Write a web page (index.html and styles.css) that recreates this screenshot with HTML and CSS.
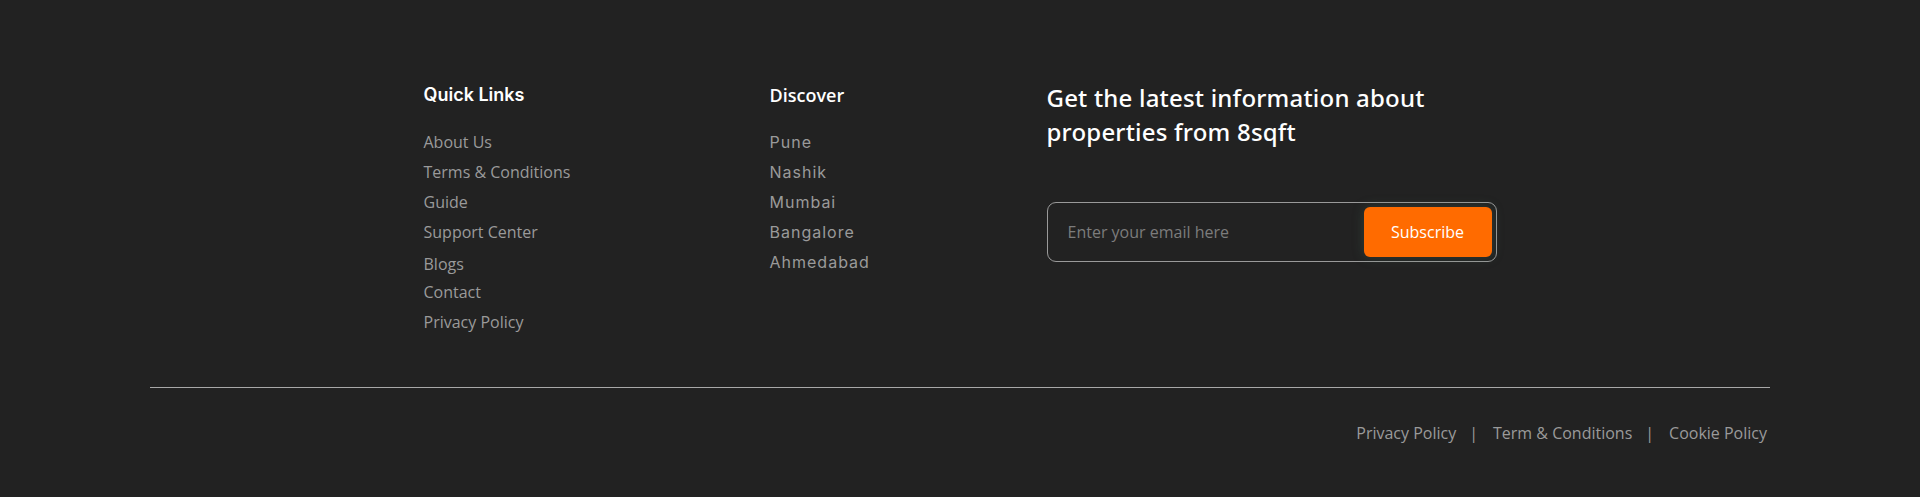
FILE: index.html
```html
<!DOCTYPE html>
<html lang="en">
<head>
<meta charset="utf-8">
<title>Footer</title>
<link rel="stylesheet" href="styles.css">
</head>
<body>
<footer class="footer">
  <div class="footer-top">
    <div class="col col-quick">
      <h3 class="col-title title-inter">Quick Links</h3>
      <ul class="link-list">
        <li><a href="#">About Us</a></li>
        <li><a href="#">Terms &amp; Conditions</a></li>
        <li><a href="#">Guide</a></li>
        <li><a href="#">Support Center</a></li>
        <li class="shift-down"><a href="#">Blogs</a></li>
        <li class="shift-up"><a href="#">Contact</a></li>
        <li><a href="#">Privacy Policy</a></li>
      </ul>
    </div>
    <div class="col col-discover">
      <h3 class="col-title title-open">Discover</h3>
      <ul class="link-list city-list">
        <li><a href="#">Pune</a></li>
        <li><a href="#">Nashik</a></li>
        <li><a href="#">Mumbai</a></li>
        <li><a href="#">Bangalore</a></li>
        <li><a href="#">Ahmedabad</a></li>
      </ul>
    </div>
    <div class="col col-news">
      <h2 class="news-title">Get the latest information about properties from 8sqft</h2>
      <form class="subscribe">
        <input class="subscribe-input" type="email" placeholder="Enter your email here">
        <button class="subscribe-btn" type="button">Subscribe</button>
      </form>
    </div>
  </div>
  <div class="footer-bottom">
    <nav class="legal">
      <a href="#">Privacy Policy</a>
      <span class="sep">|</span>
      <a href="#">Term &amp; Conditions</a>
      <span class="sep">|</span>
      <a href="#">Cookie Policy</a>
    </nav>
  </div>
</footer>
</body>
</html>
```

FILE: styles.css
```css
html, body {
  margin: 0;
  padding: 0;
  background: #222222;
}

body {
  font-family: "Open Sans", "Liberation Sans", sans-serif;
  color: #ffffff;
}

.footer {
  width: 1620px;
  margin: 0 auto;
}

.footer-top {
  width: 1073px;
  margin: 0 auto;
  padding-top: 80px;
  padding-bottom: 50px;
  display: flex;
  align-items: flex-start;
}

.col-quick {
  width: 346px;
  padding-top: 2px;
}

.col-discover {
  width: 277px;
  padding-top: 2px;
}

.col-news {
  width: 450px;
  padding-top: 1px;
}

.col-title {
  margin: 0;
  font-size: 18px;
  line-height: 26px;
  font-weight: 600;
  color: #ffffff;
}

.title-inter {
  font-family: Inter, "Open Sans", sans-serif;
}

.title-open {
  font-family: "Open Sans", "Liberation Sans", sans-serif;
}

.link-list {
  list-style: none;
  margin: 19px 0 0;
  padding: 0;
}

.link-list li {
  font-size: 16px;
  line-height: 30px;
}

.link-list a {
  color: #9a9a9a;
  text-decoration: none;
}

.link-list .shift-down {
  margin-top: 2px;
}

.link-list .shift-up {
  margin-top: -2px;
}

.city-list li {
  font-family: Inter, "Open Sans", sans-serif;
  letter-spacing: 1px;
}

.news-title {
  margin: 0;
  font-family: "Noto Sans", "Open Sans", sans-serif;
  font-size: 24px;
  line-height: 34px;
  font-weight: 500;
  letter-spacing: 0.2px;
  color: #ffffff;
}

.subscribe {
  margin-top: 53px;
  height: 60px;
  box-sizing: border-box;
  border: 1px solid #9a9a9a;
  border-radius: 9px;
  display: flex;
  align-items: center;
  padding: 0 4px 0 20px;
}

.subscribe-input {
  flex: 1;
  min-width: 0;
  background: transparent;
  border: none;
  outline: none;
  padding: 0;
  font-family: "Open Sans", "Liberation Sans", sans-serif;
  font-size: 16px;
  color: #ffffff;
}

.subscribe-input::placeholder {
  color: #7c7c7c;
}

.subscribe-btn {
  width: 128px;
  height: 50px;
  border: none;
  border-radius: 6px;
  background: #ff6b00;
  color: #ffffff;
  font-family: "Open Sans", "Liberation Sans", sans-serif;
  font-size: 16px;
  box-shadow: 0 0 12px rgba(70, 110, 90, 0.35);
  cursor: pointer;
}

.footer-bottom {
  border-top: 1px solid #a8a8a8;
  padding-top: 33px;
  padding-right: 3px;
  display: flex;
  justify-content: flex-end;
}

.legal {
  display: flex;
  align-items: center;
  font-size: 16px;
  line-height: 24px;
}

.legal a {
  color: #9a9a9a;
  text-decoration: none;
}

.legal .sep {
  color: #9a9a9a;
  margin: 0 15px 0 13px;
}
```
